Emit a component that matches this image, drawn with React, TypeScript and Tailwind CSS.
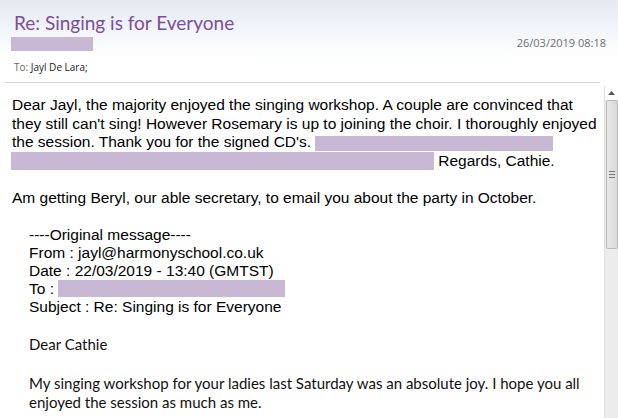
const Redact = ({ className }: { className: string }) => (
  <span className={`inline-block bg-[#c8b8d4] align-top ${className}`} />
);

const App = () => {
  return (
    <div className="w-[618px] h-[418px] overflow-hidden bg-white flex flex-col font-['Liberation_Sans',Arial,sans-serif]">
      {/* header */}
      <div className="h-[82px] shrink-0 bg-[linear-gradient(to_bottom,#e4eaf3_0px,#ffffff_58px)] pl-[14px] pr-[12px] pt-[9px] font-['Open_Sans',sans-serif]">
        <div className="font-['Lato',sans-serif] text-[19px] leading-[26px] text-[#7b4e9c] mt-[1px] -mb-[1px]">Re: Singing is for Everyone</div>
        <div className="flex items-start justify-between mt-[2px] -ml-[3px]">
          <Redact className="w-[82px] h-[14px]" />
          <span className="text-[11px] leading-[14px] text-[#6f6f6f] -mt-[1px]">26/03/2019 08:18</span>
        </div>
        <div className="mt-[9px] text-[10px] leading-[14px] text-[#666]">
          To: <span className="text-[#222]">Jayl De Lara;</span>
        </div>
      </div>
      <div className="h-px bg-[#d4d4d4] ml-[5px] mr-[18px] shrink-0" />

      {/* body */}
      <div className="flex flex-1 min-h-0">
        <div className="flex-1 pl-[12px] pt-[13px] text-[15.5px] leading-[18.5px] text-black overflow-hidden whitespace-nowrap">
          <div>Dear Jayl, the majority enjoyed the singing workshop. A couple are convinced that</div>
          <div>they still can't sing! However Rosemary is up to joining the choir. I thoroughly enjoyed</div>
          <div>
            the session. Thank you for the signed CD's.{" "}
            <Redact className="w-[238px] h-[15px] mt-[3px]" />
          </div>
          <div className="-ml-[1px]">
            <Redact className="w-[423px] h-[18px]" /> Regards, Cathie.
          </div>
          <div className="h-[18.5px]" />
          <div>Am getting Beryl, our able secretary, to email you about the party in October.</div>
          <div className="h-[18.5px]" />
          <div className="pl-[17px] leading-[18px]">
            <div>----Original message----</div>
            <div>From : jayl@harmonyschool.co.uk</div>
            <div>Date : 22/03/2019 - 13:40 (GMTST)</div>
            <div>
              To : <Redact className="w-[227px] h-[17px]" />
            </div>
            <div>Subject : Re: Singing is for Everyone</div>
            <div className="font-['Lato',sans-serif] text-[15px] leading-[19.5px] text-[#111] mt-[19px]">
              <div>Dear Cathie</div>
              <div className="h-[19.5px]" />
              <div>My singing workshop for your ladies last Saturday was an absolute joy. I hope you all</div>
              <div>enjoyed the session as much as me.</div>
            </div>
          </div>
        </div>

        {/* scrollbar */}
        <div className="w-[14px] shrink-0 mt-[3px] flex flex-col bg-[#ececec] border-l border-[#e0e0e0]">
          <div className="h-[14px] bg-white flex items-center justify-center">
            <svg width="7" height="4" viewBox="0 0 7 4">
              <path d="M0 4 L3.5 0 L7 4 Z" fill="#555" />
            </svg>
          </div>
          <div className="h-[149px] ml-[1px] bg-[linear-gradient(to_right,#e8e8e8,#d9d9d9)] border border-[#b9b9b9] rounded-[2px] flex items-center justify-start pl-[2px]">
            <div className="flex flex-col gap-[2px]">
              <div className="w-[6px] h-px bg-[#777]" />
              <div className="w-[6px] h-px bg-[#777]" />
              <div className="w-[6px] h-px bg-[#777]" />
            </div>
          </div>
          <div className="flex-1" />
        </div>
      </div>
    </div>
  );
};

export default App;
